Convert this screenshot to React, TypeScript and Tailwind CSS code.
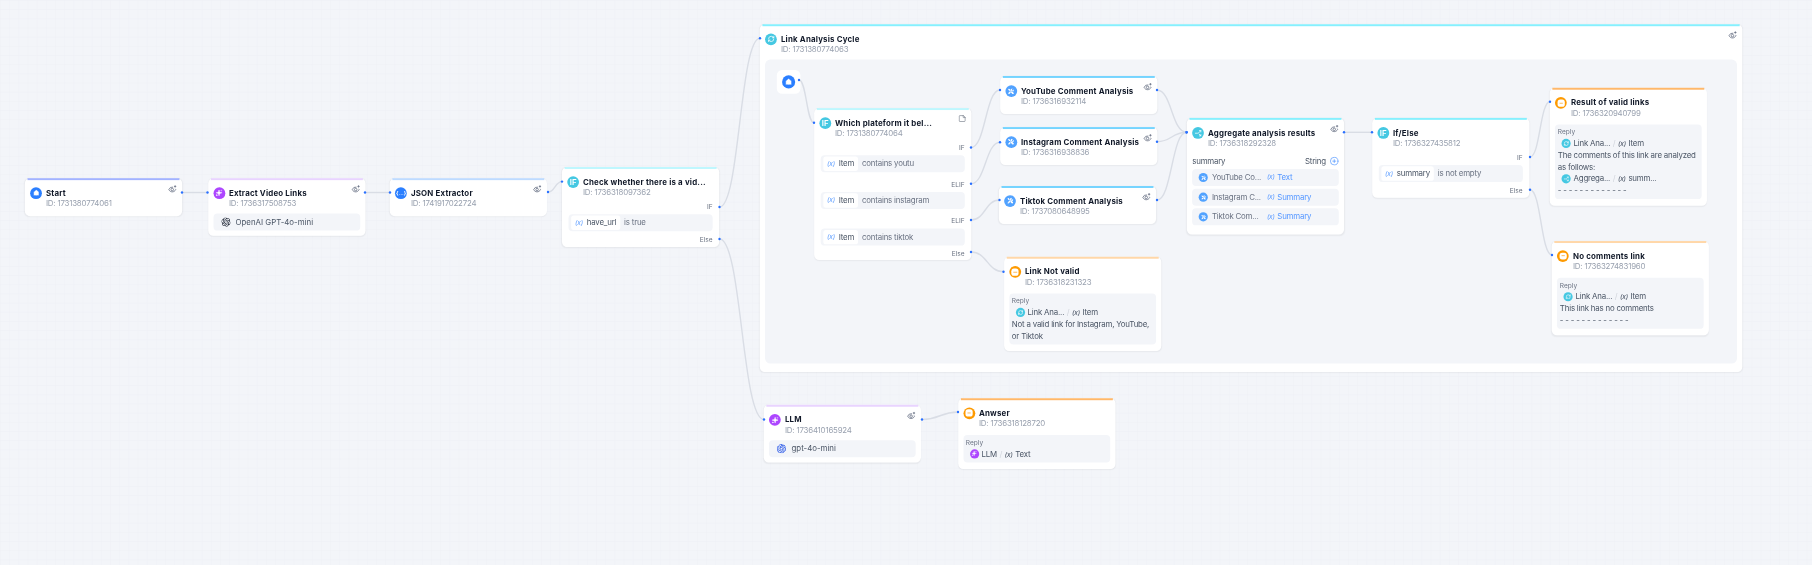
import { FC, ReactNode } from 'react'
import { House, RefreshCw, Split, StickyNote, Sparkles, CirclePlus } from 'lucide-react'
import { FaTools } from 'react-icons/fa'
import { SiOpenai } from 'react-icons/si'

// the flow canvas is zoomed out, positions below are screen px
const ZOOM = 0.655
const SURFACE = 'bg-[#f3f5f9]'
const CYAN = 'bg-[#45c8e2]'

type IconKind = 'start' | 'llm' | 'json' | 'if' | 'loop' | 'tool' | 'merge' | 'reply'

const NodeIcon: FC<{ kind: IconKind; className?: string }> = ({ kind, className = 'w-4.5 h-4.5' }) => {
  const base = `${className} shrink-0 rounded-full flex items-center justify-center text-white`
  if (kind === 'start')
    return (
      <div className={`${base} bg-blue-500`}>
        <House className="w-3/5 h-3/5" fill="white" stroke="#2b7fff" strokeWidth={1.5} />
      </div>
    )
  if (kind === 'llm')
    return (
      <div className={`${base} bg-purple-500`}>
        <Sparkles className="w-3/5 h-3/5" fill="white" strokeWidth={1} />
      </div>
    )
  if (kind === 'json')
    return (
      <div className={`${base} bg-blue-500 text-[8px] font-bold`}>
        <span>{'{…}'}</span>
      </div>
    )
  if (kind === 'if') return <div className={`${base} ${CYAN} text-xs font-semibold`}>IF</div>
  if (kind === 'loop')
    return (
      <div className={`${base} ${CYAN}`}>
        <RefreshCw className="w-3/5 h-3/5" strokeWidth={2.5} />
      </div>
    )
  if (kind === 'tool')
    return (
      <div className={`${base} bg-blue-400`}>
        <FaTools className="w-1/2 h-1/2" />
      </div>
    )
  if (kind === 'merge')
    return (
      <div className={`${base} ${CYAN}`}>
        <Split className="w-3/5 h-3/5 rotate-90" strokeWidth={2.5} />
      </div>
    )
  return (
    <div className={`${base} bg-amber-500`}>
      <div className="w-3/5 h-3/5 rounded-sm bg-white flex items-center justify-center">
        <div className="w-1/2 h-px bg-amber-500" />
      </div>
    </div>
  )
}

const EyeAdd = () => (
  <svg viewBox="0 0 16 16" fill="none" stroke="#676f83" strokeWidth={1.4} className="absolute top-2.5 right-2 w-3.5 h-3.5">
    <path d="M9.5 4.2A6.8 6.8 0 0 0 2 8.5c1.3 2.7 3.5 4 6 4s4.7-1.3 6-4a7 7 0 0 0-.8-1.3" />
    <circle cx="8" cy="8.5" r="2.2" />
    <path d="M13 1v4M11 3h4" />
  </svg>
)

interface NodeProps {
  x: number
  y: number
  bar: string
  icon: IconKind
  title: string
  id: string
  eye?: boolean
  width?: number
  height?: number
  children?: ReactNode
}

const Node: FC<NodeProps> = ({ x, y, bar, icon, title, id, eye = true, width = 240, height, children }) => (
  <div
    className="absolute rounded-lg bg-white shadow-xs"
    style={{ left: x / ZOOM, top: y / ZOOM, width, height }}
  >
    <div className={`absolute top-0 inset-x-1 h-0.75 ${bar}`} />
    {eye && <EyeAdd />}
    <div className="flex gap-1.5 pt-3.5 pl-2 pr-3">
      <NodeIcon kind={icon} />
      <div className="min-w-0">
        <div className="h-4.5 leading-4.5 text-xs font-bold tracking-wide text-gray-900 whitespace-nowrap">{title}</div>
        <div className="h-3.5 leading-3.5 text-xs tracking-tight text-gray-400 whitespace-nowrap">ID: {id}</div>
      </div>
    </div>
    {children}
  </div>
)

const ModelRow: FC<{ name: string; blue?: boolean }> = ({ name, blue }) => (
  <div className={`mx-2 mt-2 mb-2 h-6.5 rounded-md ${SURFACE} flex items-center gap-2 pl-3 text-xs text-gray-600`}>
    <SiOpenai className={`w-3.5 h-3.5 ${blue ? 'text-blue-700' : 'text-gray-900'}`} />
    <span>{name}</span>
  </div>
)

const Branch: FC<{ label: string; className: string }> = ({ label, className }) => (
  <div className={`h-4 leading-4 mr-2.5 text-right text-[10px] text-gray-500 ${className}`}>{label}</div>
)

const Var: FC<{ dark?: boolean }> = ({ dark }) => (
  <span className={`text-[10px] italic ${dark ? 'text-gray-700' : 'text-blue-500/80'}`}>(x)</span>
)

const Condition: FC<{ name: string; rule: string }> = ({ name, rule }) => (
  <div className={`mx-2.5 mt-1 h-6.5 rounded-md ${SURFACE} flex items-center gap-1.5 px-1 text-xs tracking-tight text-gray-500`}>
    <div className="h-5.5 rounded bg-white flex items-center gap-1.5 px-1.5 text-gray-600">
      <Var />
      <span>{name}</span>
    </div>
    <span>{rule}</span>
  </div>
)

const VarRef: FC<{ icon: IconKind; node: string; name: string }> = ({ icon, node, name }) => (
  <div className="flex items-center gap-1 pl-1.5 h-4.5">
    <NodeIcon kind={icon} className="w-3.5 h-3.5" />
    <span>{node}</span>
    <span className="text-gray-300">/</span>
    <Var dark />
    <span>{name}</span>
  </div>
)

const ReplyBox: FC<{ children: ReactNode }> = ({ children }) => (
  <div className={`mx-2 mt-2.5 mb-2.5 rounded-md ${SURFACE} px-1 pt-0.5 pb-1 text-xs tracking-tight leading-4.5 text-gray-600`}>
    <div className="text-[10px] tracking-normal text-gray-500">Reply</div>
    {children}
  </div>
)

const MergeRow: FC<{ node: string; name: string }> = ({ node, name }) => (
  <div className={`h-6.5 rounded-md ${SURFACE} flex items-center pl-2.5 text-xs tracking-tight text-gray-500`}>
    <NodeIcon kind="tool" className="w-3.5 h-3.5" />
    <span className="ml-1.5 w-20 mr-1 whitespace-nowrap">{node}</span>
    <span className="flex items-center gap-1 text-blue-500/80">
      <Var />
      {name}
    </span>
  </div>
)

const edges: [number, number, number, number][] = [
  [182, 192.5, 207.5, 192.5],
  [365, 192.5, 390, 192.5],
  [548, 192, 562, 181.6],
  [719.5, 207, 760, 38.3],
  [719.5, 239, 764, 419.5],
  [922, 419.5, 958, 412],
  [799, 80, 814, 122.7],
  [971, 147.5, 1000, 90],
  [971, 183.7, 1000, 142.3],
  [971, 220, 999.5, 200],
  [971, 252, 1003.5, 271.7],
  [1157, 90, 1186.5, 132.3],
  [1157, 141.7, 1186.5, 132.3],
  [1157, 200, 1186.5, 132.3],
  [1344, 132.3, 1372, 132.3],
  [1530, 157, 1550, 101.7],
  [1530, 189.7, 1552, 255],
]

const Edges = () => (
  <svg className="absolute inset-0 w-full h-full pointer-events-none">
    {edges.map(([x1, y1, x2, y2]) => {
      const mid = (x1 + x2) / 2
      return (
        <g key={`${x1}-${y1}-${x2}-${y2}`}>
          <path d={`M${x1} ${y1}C${mid} ${y1} ${mid} ${y2} ${x2} ${y2}`} fill="none" stroke="#d9dde5" strokeWidth={1.4} />
          <circle cx={x1} cy={y1} r={1.2} fill="#2970ff" />
          <circle cx={x2} cy={y2} r={1.2} fill="#2970ff" />
        </g>
      )
    })}
  </svg>
)

const GridBackground = () => (
  <svg className="absolute inset-0 w-full h-full">
    <defs>
      <pattern id="dots" width={9.17} height={9.17} patternUnits="userSpaceOnUse">
        <path d="M9.17 0H0V9.17" fill="none" stroke="#eef0f5" strokeWidth={1} />
      </pattern>
    </defs>
    <rect width="100%" height="100%" fill="url(#dots)" />
  </svg>
)

const App = () => {
  return (
    <div className={`relative w-screen h-screen overflow-hidden ${SURFACE}`} style={{ fontFamily: 'Inter, sans-serif' }}>
      <GridBackground />
      <div className="absolute top-0 left-0 origin-top-left scale-[0.655]">
        <Node x={25} y={178} bar="bg-indigo-300" icon="start" title="Start" id="1731380774061">
          <div className="h-3" />
        </Node>
        <Node x={208} y={178} bar="bg-purple-200" icon="llm" title="Extract Video Links" id="1736317508753">
          <ModelRow name="OpenAI GPT-4o-mini" />
        </Node>
        <Node x={390} y={178} bar="bg-blue-200" icon="json" title="JSON Extractor" id="1741917022724">
          <div className="h-3" />
        </Node>
        <Node x={562} y={167} bar="bg-cyan-200/70" icon="if" title="Check whether there is a vid..." id="1736318097362" eye={false}>
          <Branch label="IF" className="mt-1.5" />
          <Condition name="have_url" rule="is true" />
          <Branch label="Else" className="mt-1" />
          <div className="h-1" />
        </Node>

        <Node x={760} y={24} bar="bg-cyan-300/70" icon="loop" title="Link Analysis Cycle" id="1731380774063" width={1500} height={531}>
          <div className={`mx-2 mt-2 h-116 rounded-lg ${SURFACE}`} />
        </Node>

        <div
          className="absolute w-9 h-9 rounded-lg bg-white flex items-center justify-center"
          style={{ left: 777 / ZOOM, top: 70 / ZOOM }}
        >
          <NodeIcon kind="start" className="w-5 h-5" />
        </div>

        <Node x={814} y={108} bar="bg-cyan-200/70" icon="if" title="Which plateform it bel..." id="1731380774064" eye={false}>
          <StickyNote className="absolute top-2.5 right-2 w-3 h-3 text-gray-600" strokeWidth={1.5} />
          <Branch label="IF" className="mt-1.5" />
          <Condition name="Item" rule="contains youtu" />
          <Branch label="ELIF" className="mt-2.5" />
          <Condition name="Item" rule="contains instagram" />
          <Branch label="ELIF" className="mt-2.5" />
          <Condition name="Item" rule="contains tiktok" />
          <Branch label="Else" className="mt-1" />
          <div className="h-0.5" />
        </Node>

        <Node x={1000} y={76} bar="bg-sky-300" icon="tool" title="YouTube Comment Analysis" id="1736316932114">
          <div className="h-3" />
        </Node>
        <Node x={1000} y={127} bar="bg-sky-300" icon="tool" title="Instagram Comment Analysis" id="1736316938836">
          <div className="h-3" />
        </Node>
        <Node x={999} y={186} bar="bg-sky-300" icon="tool" title="Tiktok Comment Analysis" id="1737080648995">
          <div className="h-3" />
        </Node>

        <Node x={1004} y={257} bar="bg-orange-200" icon="reply" title="Link Not valid" id="1736318231323" eye={false}>
          <ReplyBox>
            <VarRef icon="loop" node="Link Ana..." name="Item" />
            <div>Not a valid link for Instagram, YouTube, or Tiktok</div>
          </ReplyBox>
        </Node>

        <Node x={1187} y={118} bar="bg-cyan-300/70" icon="merge" title="Aggregate analysis results" id="1736318292328">
          <div className="mx-2 mt-3 h-4 flex items-center justify-between text-xs tracking-tight text-gray-600">
            <span>summary</span>
            <span className="flex items-center gap-1.5">
              String <CirclePlus className="w-3.5 h-3.5 text-blue-500" strokeWidth={1.5} />
            </span>
          </div>
          <div className="mx-2 mt-1 mb-3.5 flex flex-col gap-1">
            <MergeRow node="YouTube Co..." name="Text" />
            <MergeRow node="Instagram C..." name="Summary" />
            <MergeRow node="Tiktok Com..." name="Summary" />
          </div>
        </Node>

        <Node x={1372} y={118} bar="bg-cyan-300/70" icon="if" title="If/Else" id="1736327435812" eye={false}>
          <Branch label="IF" className="mt-1.5" />
          <Condition name="summary" rule="is not empty" />
          <Branch label="Else" className="mt-1" />
          <div className="h-1" />
        </Node>

        <Node x={1550} y={88} bar="bg-orange-300" icon="reply" title="Result of valid links" id="1736320940799" eye={false}>
          <ReplyBox>
            <VarRef icon="loop" node="Link Ana..." name="Item" />
            <div>The comments of this link are analyzed as follows:</div>
            <VarRef icon="merge" node="Aggrega..." name="summ..." />
            <div>- - - - - - - - - - - - -</div>
          </ReplyBox>
        </Node>

        <Node x={1552} y={241} bar="bg-orange-200" icon="reply" title="No comments link" id="17363274831960" eye={false}>
          <ReplyBox>
            <VarRef icon="loop" node="Link Ana..." name="Item" />
            <div>This link has no comments</div>
            <div>- - - - - - - - - - - - -</div>
          </ReplyBox>
        </Node>

        <Node x={764} y={405} bar="bg-purple-200" icon="llm" title="LLM" id="1736410165924">
          <ModelRow name="gpt-4o-mini" blue />
        </Node>

        <Node x={958} y={398} bar="bg-orange-300" icon="reply" title="Anwser" id="1736318128720" eye={false}>
          <ReplyBox>
            <VarRef icon="llm" node="LLM" name="Text" />
          </ReplyBox>
        </Node>
      </div>
      <Edges />
    </div>
  )
}

export default App
